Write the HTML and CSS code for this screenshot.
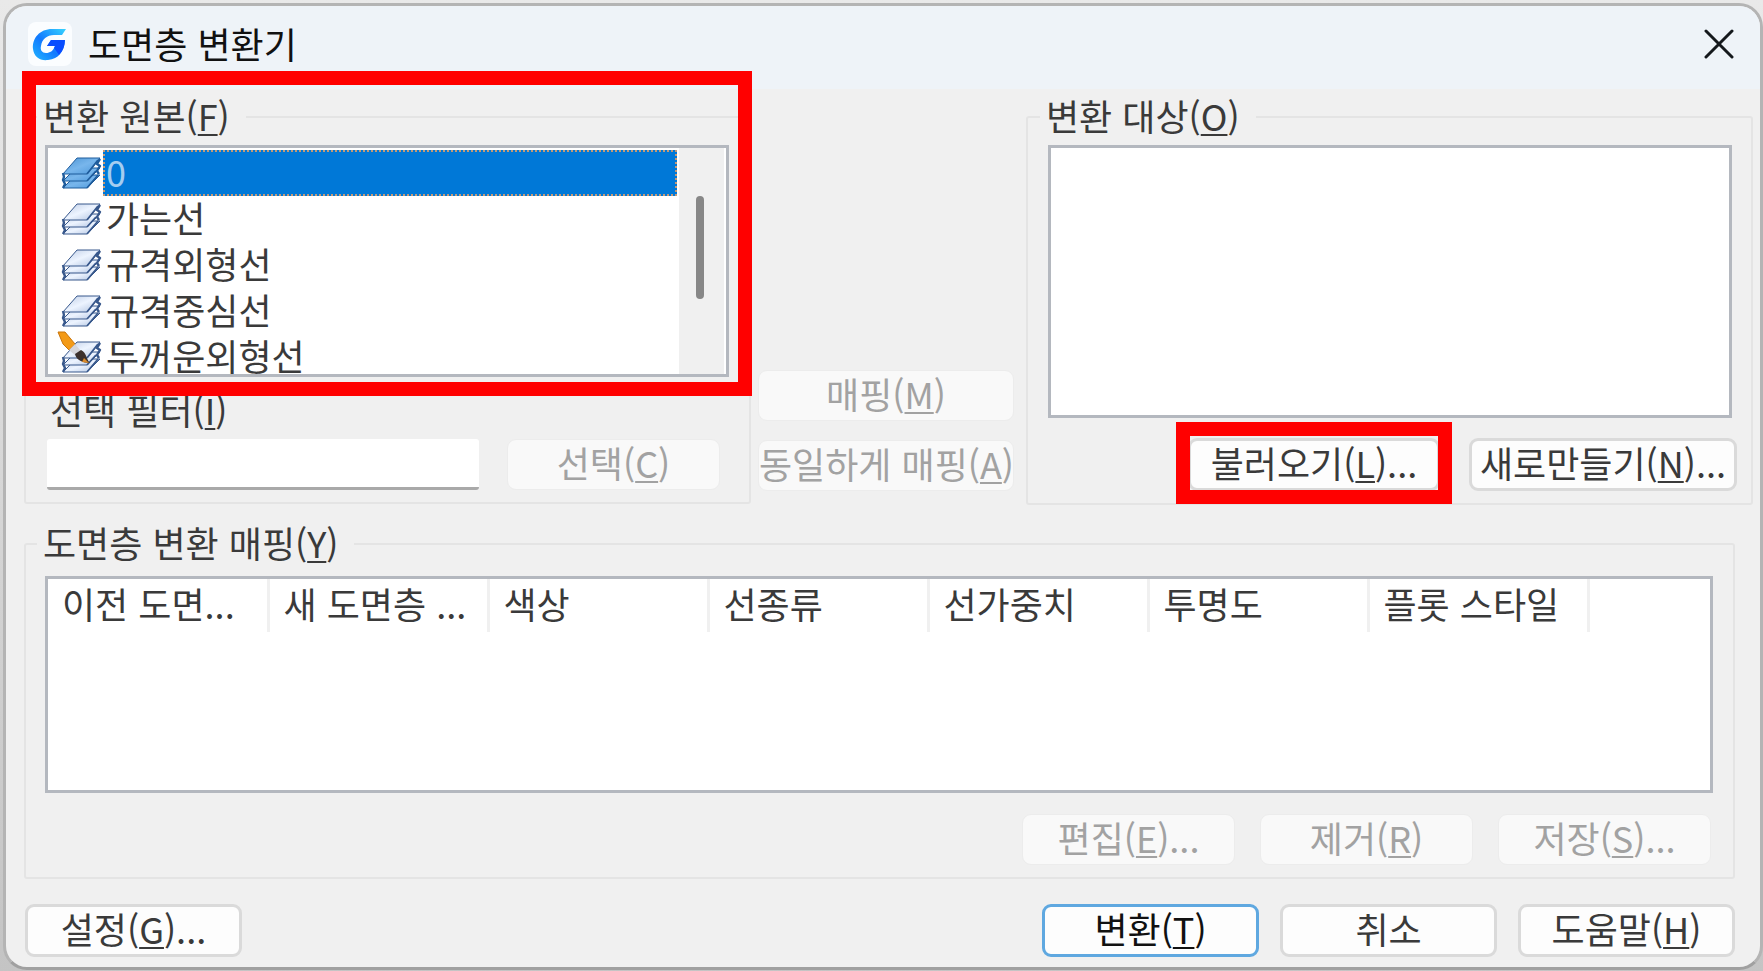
FILE: index.html
```html
<!DOCTYPE html>
<html lang="ko">
<head>
<meta charset="utf-8">
<title>도면층 변환기</title>
<meta name="viewport" content="width=device-width, initial-scale=1">
<link rel="stylesheet" href="styles.css">
</head>
<body>
<svg class="defs" width="0" height="0" aria-hidden="true">
  <defs>
    <linearGradient id="sheet" x1="0" y1="0" x2="1" y2="1">
      <stop offset="0" stop-color="#bccbe4"/><stop offset=".5" stop-color="#edf4ff"/><stop offset="1" stop-color="#adc0de"/>
    </linearGradient>
    <linearGradient id="sheet-on" x1="0" y1="0" x2="1" y2="1">
      <stop offset="0" stop-color="#4b93d3"/><stop offset=".5" stop-color="#78b6ec"/><stop offset="1" stop-color="#4c97da"/>
    </linearGradient>
    <linearGradient id="brand" x1="1" y1="0" x2="0" y2="1">
      <stop offset="0" stop-color="#37d4ff"/><stop offset=".55" stop-color="#1279ff"/><stop offset="1" stop-color="#22b6ff"/>
    </linearGradient>
    <g id="stack" stroke-linejoin="round">
      <path d="M2 31 L26 31 L39 18 L15 18 Z"/>
      <path d="M2 24 L26 24 L39 11 L15 11 Z"/>
      <path d="M2 17 L26 17 L39 1 L16 1 Z"/>
      <path d="M2 16 L3 20 L2 23 L4 27 L2 31 M39 2 L36 7 L39 9 L36 14 L38 17" fill="none" stroke-width="2.4"/>
      <path d="M26 31 L37 18 M26 24 L35 14 M26 17 L37 3" fill="none" stroke-width="1.8"/>
    </g>
  </defs>
</svg>

<main class="dialog" role="dialog" aria-labelledby="dialog-title">
  <header class="titlebar">
    <svg class="logo" viewBox="0 0 44 44" aria-hidden="true">
      <rect width="44" height="44" rx="8" fill="#fbfdff"/>
      <path fill="url(#brand)" d="M38 7 H24 C12 7 4 16 5 27 C6 35 12 39 20 38 C31 37 36 29 37 18 H23 L19 24 H27 C25 29 22 31 18 31 C14 31 12 28 13 24 C14 17 19 13 26 13 H34 Z"/>
      <path fill="#0a4dff" d="M23 18 H37 C37 24 35 29 31 33 L26 26 L27 24 H19 Z"/>
    </svg>
    <h1 class="title" id="dialog-title">도면층 변환기</h1>
    <button class="close" type="button" aria-label="닫기">
      <svg viewBox="0 0 30 30" width="30" height="30" aria-hidden="true"><path d="M2 2 L28 28 M28 2 L2 28" stroke="#14181c" stroke-width="3" stroke-linecap="round"/></svg>
    </button>
  </header>

  <div class="content">
    <div class="upper">
      <div class="pane">
        <fieldset class="group source">
          <legend>변환 원본(<u>F</u>)</legend>
          <div class="well layers">
            <ul class="layer-list" role="listbox" aria-label="변환 원본">
              <li class="layer selected" role="option" aria-selected="true">
                <svg class="layer-icon" viewBox="0 0 42 33" fill="url(#sheet-on)"><use href="#stack"/></svg><span class="layer-name">0</span>
              </li>
              <li class="layer" role="option" aria-selected="false">
                <svg class="layer-icon" viewBox="0 0 42 33" fill="url(#sheet)"><use href="#stack"/></svg><span class="layer-name">가는선</span>
              </li>
              <li class="layer" role="option" aria-selected="false">
                <svg class="layer-icon" viewBox="0 0 42 33" fill="url(#sheet)"><use href="#stack"/></svg><span class="layer-name">규격외형선</span>
              </li>
              <li class="layer" role="option" aria-selected="false">
                <svg class="layer-icon" viewBox="0 0 42 33" fill="url(#sheet)"><use href="#stack"/></svg><span class="layer-name">규격중심선</span>
              </li>
              <li class="layer" role="option" aria-selected="false">
                <svg class="layer-icon" viewBox="0 0 42 33" fill="url(#sheet)"><use href="#stack"/>
                  <path d="M-3 -9 L4 -9 L14 3 L8 9 L2 3 Z" fill="#f39a17" stroke="#c9750c"/>
                  <path d="M8 9 L14 3 L20 10 L15 15 Z" fill="#d5d5da" stroke="none"/>
                  <path d="M14 13 L20 9 C26 12 25 18 29 22 C22 22 15 19 14 13 Z" fill="#3b302c" stroke="none"/>
                  <path d="M23 17 L28 22 L21 21 Z" fill="#d98a2b" stroke="none"/>
                </svg><span class="layer-name">두꺼운외형선</span>
              </li>
            </ul>
            <div class="scrollbar"><div class="thumb"></div></div>
          </div>
          <label class="filter-label" for="filter">선택 필터(<u>I</u>)</label>
          <div class="filter-row">
            <input class="filter-input" id="filter" type="text">
            <button class="btn wide" type="button" disabled>선택(<u>C</u>)</button>
          </div>
        </fieldset>
        <div class="mark mark-source"></div>
      </div>

      <div class="map-actions">
        <button class="btn" type="button" disabled>매핑(<u>M</u>)</button>
        <button class="btn" type="button" disabled>동일하게 매핑(<u>A</u>)</button>
      </div>

      <fieldset class="group target">
        <legend>변환 대상(<u>O</u>)</legend>
        <ul class="well target-list" role="listbox" aria-label="변환 대상"></ul>
        <div class="target-row">
          <div class="load">
            <button class="btn" type="button">불러오기(<u>L</u>)...</button>
            <div class="mark mark-load"></div>
          </div>
          <button class="btn new" type="button">새로만들기(<u>N</u>)...</button>
        </div>
      </fieldset>
    </div>

    <fieldset class="group mapping">
      <legend>도면층 변환 매핑(<u>Y</u>)</legend>
      <div class="well table-well">
        <table class="map-table">
          <thead>
            <tr>
              <th scope="col">이전 도면...</th>
              <th scope="col">새 도면층 ...</th>
              <th scope="col">색상</th>
              <th scope="col">선종류</th>
              <th scope="col">선가중치</th>
              <th scope="col">투명도</th>
              <th scope="col">플롯 스타일</th>
              <td class="rest"></td>
            </tr>
          </thead>
        </table>
      </div>
      <div class="map-row">
        <button class="btn wide" type="button" disabled>편집(<u>E</u>)...</button>
        <button class="btn wide" type="button" disabled>제거(<u>R</u>)</button>
        <button class="btn wide" type="button" disabled>저장(<u>S</u>)...</button>
      </div>
    </fieldset>

    <footer class="footer">
      <button class="btn settings" type="button">설정(<u>G</u>)...</button>
      <button class="btn primary" type="button">변환(<u>T</u>)</button>
      <button class="btn" type="button">취소</button>
      <button class="btn" type="button">도움말(<u>H</u>)</button>
    </footer>
  </div>
</main>
</body>
</html>
```
FILE: styles.css
```css
* { box-sizing: border-box; }

html { background: linear-gradient(#e9e9e9, #c4c4c4); min-height: 100%; }

body {
  margin: 0;
  padding: 3px 0 3px 3px;
  font-family: "Noto Sans CJK KR", "Liberation Sans", sans-serif;
  font-size: 36px;
  line-height: 36px;
  color: #3a3a3a;
}

.defs { position: absolute; }

u { text-underline-offset: 3px; text-decoration-thickness: 2px; text-decoration-skip-ink: none; }

button, input { font: inherit; color: inherit; }

.dialog {
  border: 3px solid #b4b4b4;
  border-bottom-color: #a0a0a0;
  border-radius: 24px;
  background: #f0f0f0;
  overflow: hidden;
}

.titlebar {
  display: flex;
  align-items: center;
  height: 83px;
  padding: 0 26px 8px 22px;
  background: #eef3f8;
}

.logo { width: 44px; height: 44px; flex: none; }

.title {
  flex: 1;
  margin: 0 0 0 16px;
  padding-bottom: 2px;
  font-size: 36px;
  font-weight: 400;
  color: #111;
}

.close {
  display: flex;
  padding: 0;
  border: 0;
  background: none;
}

.content { padding: 8px 7px 10px 18px; }

.upper { display: grid; grid-template-columns: 1fr 275px 1fr; }

.pane { position: relative; min-width: 0; }

.group {
  min-width: 0;
  margin: 0;
  border: 2px solid #e4e4e4;
  border-radius: 3px;
  padding: 0;
}

.group legend { margin-left: -8px; padding: 0 16px 4px 6px; }

.well {
  margin: 0;
  padding: 0;
  border: 3px solid #b4b8bf;
  background: #fff;
}

.source { padding: 8px 20px 12px 19px; }

.layers {
  display: flex;
  height: 232px;
  overflow: hidden;
}

.layer-list {
  flex: 1;
  margin: 0;
  padding: 2px 0 0 13px;
  list-style: none;
}

.layer { display: flex; align-items: center; height: 46px; }

.layer-icon {
  width: 42px;
  height: 33px;
  flex: none;
  overflow: visible;
  stroke: #38588c;
  stroke-width: 1;
}

.selected .layer-icon { stroke: #1f5c9c; }

.layer-name { flex: 1; padding: 3px 3px 7px; line-height: 36px; }

.selected .layer-name {
  background: #0078d7;
  color: #a5cdf0;
  outline: 2px dotted #c39a77;
  outline-offset: -2px;
}

.scrollbar {
  width: 47px;
  margin-left: 2px;
  padding: 48px 0 0 17px;
  background: #f0f0f0;
  border-right: 2px solid #fff;
}

.thumb { width: 8px; height: 103px; border-radius: 4px; background: #878787; }

.filter-label { display: block; margin: 14px 0 12px 5px; }

.filter-row { display: flex; gap: 28px; padding: 0 9px 0 2px; }

.filter-input {
  flex: 1;
  min-width: 0;
  height: 51px;
  border: 0;
  border-bottom: 3px solid #a9a9a9;
  border-radius: 3px;
  padding: 0 8px;
  background: #fff;
}

.btn {
  height: 53px;
  padding: 0 0 5px;
  border: 3px solid #dadada;
  border-radius: 9px;
  background: #fdfdfd;
  white-space: nowrap;
}

.btn:disabled {
  height: 51px;
  border: 1px solid #ececec;
  background: #f9f9f9;
  color: #a2a2a2;
}

.wide { width: 213px; }

.map-actions {
  display: flex;
  flex-direction: column;
  justify-content: flex-end;
  gap: 19px;
  padding: 0 12px 14px 7px;
}

.target {
  display: flex;
  flex-direction: column;
  padding: 8px 14px 12px 20px;
}

.target-list { height: 273px; margin-right: 5px; }

.target-row { display: flex; justify-content: flex-end; gap: 29px; margin-top: 20px; }

.load { position: relative; }

.load .btn { width: 252px; }

.new { width: 268px; }

.mark { position: absolute; border: 14px solid #f00; pointer-events: none; }

.mark-source { top: -26px; left: -2px; right: -1px; height: 325px; }

.mark-load { top: -16px; bottom: -13px; left: -12px; right: -12px; }

.mapping { margin: 19px 18px 0 0; padding: 12px 20px 12px 19px; }

.table-well { height: 217px; overflow: hidden; }

.map-table { width: 100%; table-layout: fixed; border-collapse: collapse; }

.map-table th {
  width: 220px;
  height: 53px;
  padding: 0 0 6px 14px;
  border-right: 3px solid #f0f0f0;
  font-weight: 400;
  text-align: left;
  white-space: nowrap;
}

.rest { padding: 0; }

.map-row { display: flex; justify-content: flex-end; gap: 25px; margin-top: 21px; padding-right: 2px; }

.footer { display: flex; gap: 21px; margin: 25px 18px 0 1px; }

.footer .btn { width: 217px; }

.settings { margin-right: auto; }

.primary { border-color: #5fa8e0; color: #111; }
```
